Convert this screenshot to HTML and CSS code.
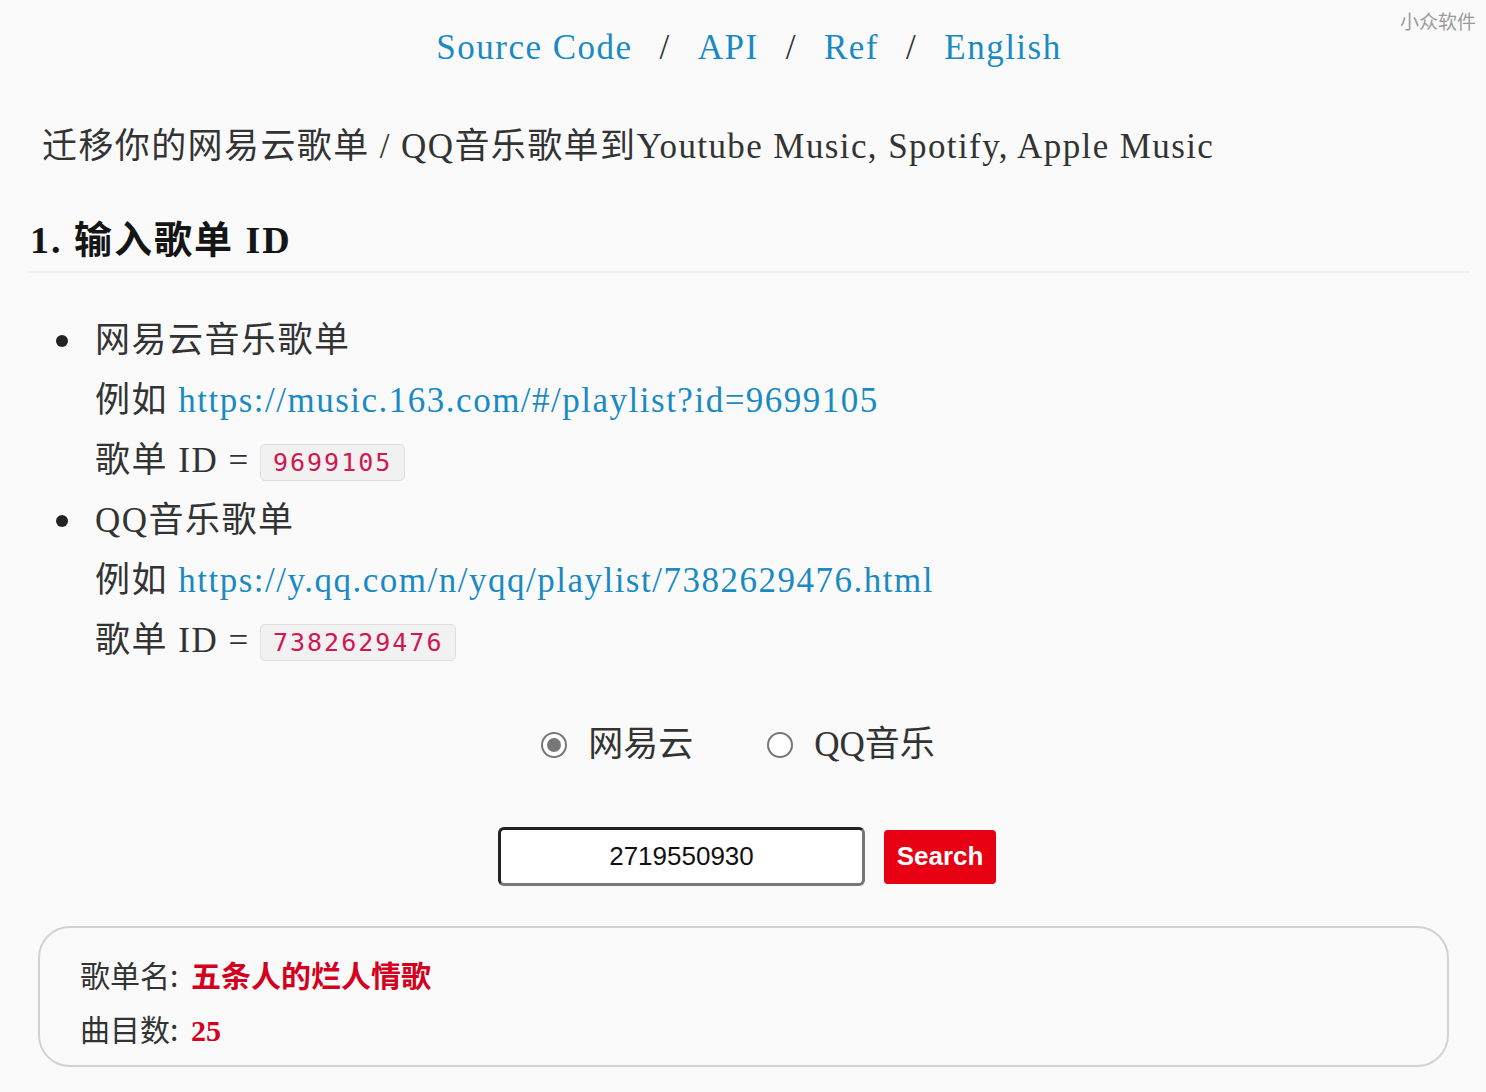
FILE: index.html
```html
<!DOCTYPE html>
<html lang="zh-CN">
<head>
<meta charset="utf-8">
<title>迁移歌单</title>
<link rel="stylesheet" href="styles.css">
</head>
<body>
<div class="watermark">小众软件</div>
<nav class="nav">
  <a href="#">Source Code</a><span class="sep">/</span><a href="#">API</a><span class="sep">/</span><a href="#">Ref</a><span class="sep">/</span><a href="#">English</a>
</nav>
<p class="subtitle">迁移你的网易云歌单 / QQ音乐歌单到Youtube Music, Spotify, Apple Music</p>
<h2 class="section-title">1. 输入歌单 ID</h2>
<ul class="sources">
  <li>
    <div>网易云音乐歌单</div>
    <div>例如 <a href="#">https://music.163.com/#/playlist?id=9699105</a></div>
    <div>歌单 ID = <code class="code">9699105</code></div>
  </li>
  <li>
    <div>QQ音乐歌单</div>
    <div>例如 <a href="#">https://y.qq.com/n/yqq/playlist/7382629476.html</a></div>
    <div>歌单 ID = <code class="code">7382629476</code></div>
  </li>
</ul>
<div class="radios">
  <label class="radio"><input type="radio" name="src" checked><span>网易云</span></label>
  <label class="radio"><input type="radio" name="src"><span>QQ音乐</span></label>
</div>
<div class="search-row">
  <input class="id-input" type="text" value="2719550930">
  <button class="search-btn">Search</button>
</div>
<div class="result">
  <div class="result-line">歌单名: <strong class="name">五条人的烂人情歌</strong></div>
  <div class="result-line">曲目数: <strong class="count">25</strong></div>
</div>
</body>
</html>
```
FILE: styles.css
```css
html, body {
  margin: 0;
  padding: 0;
}
body {
  background: #fafafb;
  padding: 0 18px 0 30px;
  font-family: "Liberation Serif", "Noto Sans CJK SC", serif;
  font-size: 35px;
  letter-spacing: 1.5px;
  color: #333;
  position: relative;
}
a {
  color: #1a8ac3;
  text-decoration: none;
}
.watermark {
  position: absolute;
  top: 8px;
  right: 10px;
  font-family: "Noto Sans CJK SC", sans-serif;
  font-size: 19px;
  letter-spacing: 0;
  color: #9a9a9a;
  line-height: 26px;
}
.nav {
  padding-top: 20px;
  line-height: 56px;
  text-align: center;
}
.nav .sep {
  color: #333;
  margin: 0 27px;
}
.subtitle {
  margin: 41px 0 0;
  padding-left: 12px;
  line-height: 60px;
  letter-spacing: 1.4px;
}
.section-title {
  margin: 33px -2px 0 -2px;
  padding: 0 0 1px 2px;
  font-size: 38px;
  line-height: 60px;
  color: #151515;
  font-weight: bold;
  letter-spacing: 2px;
  border-bottom: 2px solid #efefef;
}
.sources {
  margin: 38px 0 0;
  padding-left: 65px;
  line-height: 60px;
  list-style: none;
}
.sources li {
  position: relative;
}
.sources li::before {
  content: "";
  position: absolute;
  left: -39px;
  top: 24px;
  width: 12px;
  height: 12px;
  border-radius: 50%;
  background: #222;
}
.code {
  display: inline-block;
  font-family: "DejaVu Sans Mono", monospace;
  font-size: 25px;
  letter-spacing: 2px;
  line-height: 27px;
  padding: 4px 12px;
  color: #d0174f;
  background: #f1f1f1;
  border: 1px solid #dedede;
  border-radius: 5px;
  vertical-align: 1px;
}
.radios {
  margin-top: 44px;
  padding-right: 22px;
  display: flex;
  justify-content: center;
  gap: 74px;
  line-height: 60px;
  letter-spacing: 0;
}
.radio {
  display: flex;
  align-items: center;
  gap: 21px;
}
.radio input {
  appearance: none;
  -webkit-appearance: none;
  margin: 0;
  width: 26px;
  height: 26px;
  border: 2px solid #777;
  border-radius: 50%;
  background: #fff;
  box-sizing: border-box;
  position: relative;
}
.radio input:checked::after {
  content: "";
  position: absolute;
  left: 4px;
  top: 4px;
  width: 14px;
  height: 14px;
  border-radius: 50%;
  background: #777;
}
.search-row {
  margin-top: 52px;
  padding-right: 4px;
  display: flex;
  justify-content: center;
  align-items: center;
  gap: 19px;
}
.id-input {
  box-sizing: border-box;
  width: 367px;
  height: 59px;
  border: 3px solid;
  border-color: #222 #777 #777 #222;
  border-radius: 6px;
  background: #fff;
  font-family: "Liberation Sans", Arial, sans-serif;
  font-size: 26px;
  letter-spacing: 0;
  color: #111;
  text-align: center;
  outline: none;
  padding: 0 10px;
}
.search-btn {
  width: 112px;
  height: 54px;
  border: none;
  border-radius: 4px;
  background: #e60012;
  color: #fff;
  font-family: "Liberation Sans", Arial, sans-serif;
  font-weight: bold;
  font-size: 26px;
  letter-spacing: 0;
  padding: 0;
}
.result {
  margin: 40px 19px 0 8px;
  border: 2px solid #d2d2d4;
  border-radius: 32px;
  padding: 19px 40px 7px;
  font-family: "Noto Sans CJK SC", sans-serif;
  font-size: 30px;
  letter-spacing: 0;
  color: #333;
}
.result-line {
  line-height: 54px;
}
.result .name {
  color: #d4001c;
  font-weight: bold;
  margin-left: 6px;
}
.result .count {
  color: #d4001c;
  font-weight: bold;
  font-family: "Liberation Serif", serif;
  margin-left: 6px;
}
```
